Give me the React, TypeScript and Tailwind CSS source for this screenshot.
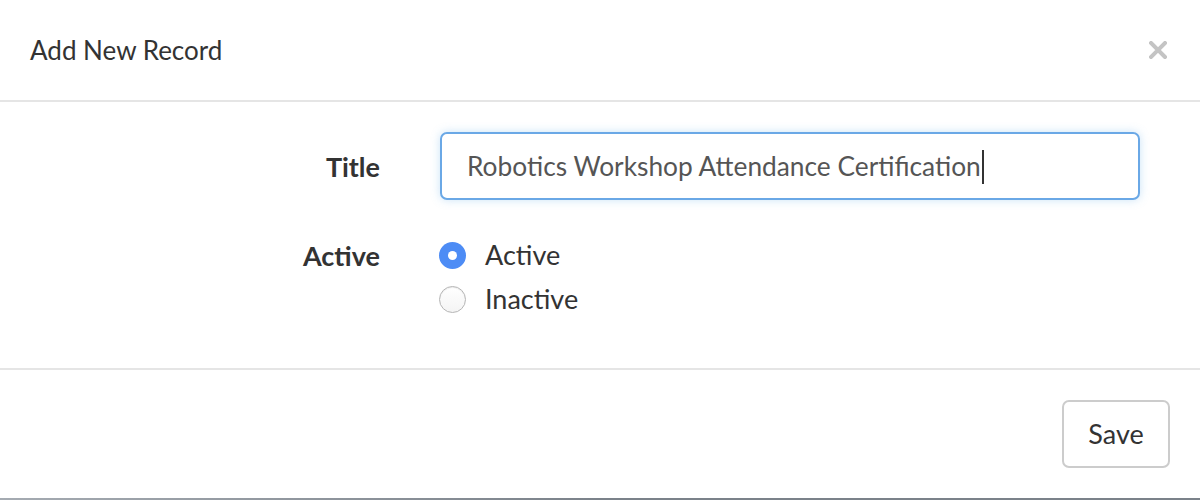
import { useState } from 'react'

const font = { fontFamily: 'Lato, "Open Sans", sans-serif' }

function CloseIcon() {
  return (
    <svg width="18" height="18" viewBox="0 0 18 18" className="block">
      <path d="M2 2 L16 16 M16 2 L2 16" stroke="#c4c4c4" strokeWidth="4" strokeLinecap="square" />
    </svg>
  )
}

function Radio({ checked, label, onClick }: { checked: boolean; label: string; onClick: () => void }) {
  return (
    <label className="flex h-[44px] cursor-pointer items-center gap-[19px]" onClick={onClick}>
      {checked ?
        <span className="flex h-[27px] w-[27px] items-center justify-center rounded-full bg-[#4d8cf5]">
          <span className="h-[9px] w-[9px] rounded-full bg-white" />
        </span>
      : <span className="h-[27px] w-[27px] rounded-full border border-[#b5b5b5] bg-gradient-to-b from-white to-[#f4f4f4] shadow-[inset_0_1px_1px_rgba(0,0,0,0.08)]" />}
      <span className="text-[27px] text-[#333]">{label}</span>
    </label>
  )
}

export default function App() {
  const [active, setActive] = useState(true)

  return (
    <div className="flex h-[500px] w-[1200px] flex-col bg-white" style={font}>
      <div className="flex h-[102px] shrink-0 items-center justify-between border-b-2 border-[#e5e5e5] px-[30px]">
        <h4 className="text-[26px] text-[#333]">Add New Record</h4>
        <button className="mr-[3px]">
          <CloseIcon />
        </button>
      </div>

      <div className="flex h-[266px] shrink-0 flex-col gap-[30px] px-[30px] pt-[30px]">
        <div className="flex items-center">
          <label className="w-[350px] pt-[2px] text-right text-[27px] font-bold text-[#333]">Title</label>
          <div className="ml-[60px] flex h-[68px] w-[700px] items-center rounded-[7px] border-2 border-[#6aa8e6] bg-white px-[25px] pt-[2px] shadow-[0_0_10px_rgba(102,175,233,0.35)]">
            <span className="text-[26.3px] text-[#555]">Robotics Workshop Attendance Certification</span>
            <span className="ml-[1px] h-[34px] w-[2px] bg-[#333]" />
          </div>
        </div>

        <div className="flex items-start pt-[3px]">
          <label className="flex h-[44px] w-[350px] items-center justify-end pt-[2px] text-[27px] font-bold text-[#333]">
            Active
          </label>
          <div className="ml-[59px] flex flex-col">
            <Radio checked={active} label="Active" onClick={() => setActive(true)} />
            <Radio checked={!active} label="Inactive" onClick={() => setActive(false)} />
          </div>
        </div>
      </div>

      <div className="flex flex-1 items-start justify-end border-t-2 border-[#e5e5e5] px-[30px] pt-[30px]">
        <button className="h-[68px] w-[108px] rounded-[7px] border-2 border-[#cccccc] bg-white text-[27px] text-[#333]">
          Save
        </button>
      </div>

      <div className="h-[2px] shrink-0 bg-gradient-to-r from-[#a5abb2] via-[#7b828a] to-[#7b828a]" />
    </div>
  )
}
